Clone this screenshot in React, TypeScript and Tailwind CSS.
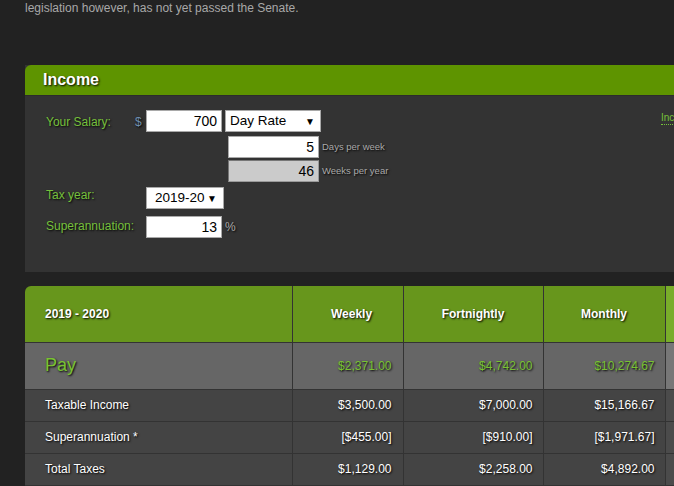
const shadow = "[text-shadow:1px_1px_2px_#000]";

const rows = [
  { label: "Taxable Income", values: ["$3,500.00", "$7,000.00", "$15,166.67", "$182,000.00"] },
  { label: "Superannuation *", values: ["[$455.00]", "[$910.00]", "[$1,971.67]", "[$23,660.00]"] },
  { label: "Total Taxes", values: ["$1,129.00", "$2,258.00", "$4,892.00", "$58,704.00"] },
];

function Field({ value, className = "", grey = false }: { value: string; className?: string; grey?: boolean }) {
  return (
    <div
      className={`h-[22px] border flex items-center justify-end pr-[4px] text-[14px] text-black ${
        grey ? "bg-[#cbcbcb] border-[#9a9a9a] border-t-[#777] border-l-[#777]" : "bg-white border-[#a9a9a9]"
      } ${className}`}
    >
      {value}
    </div>
  );
}

function Select({ value, className = "" }: { value: string; className?: string }) {
  return (
    <div
      className={`h-[22px] bg-white border border-[#a9a9a9] flex items-center justify-between pl-[4px] pr-[5px] text-[13.5px] text-black ${className}`}
    >
      <span>{value}</span>
      <span className="text-[10px]">▼</span>
    </div>
  );
}

export default function App() {
  return (
    <div className="w-[674px] h-[486px] overflow-hidden bg-[#222] font-['Liberation_Sans',Arial,sans-serif]">
      <div className="w-[790px] pl-[25px]">
        <p className="text-[12px] leading-[16px] text-[#a8a8a8]">
          legislation however, has not yet passed the Senate.
        </p>

        {/* Income panel */}
        <div className="mt-[49px] bg-[#333]">
          <div className={`h-[31px] bg-[#5e9400] rounded-tl-[6px] pl-[18px] flex items-center text-[16px] font-bold text-white border-b border-[#2c2c2c] ${shadow}`}>
            Income
          </div>
          <div className="relative h-[176px] pl-[21px] pt-[14px]">
            <a className="absolute left-[636px] top-[16px] text-[10px] text-[#77c23a] border-b border-dotted border-[#77c23a] leading-[12px]">
              Income tax rates
            </a>

            <div className="flex items-start">
              <span className={`w-[89px] pt-[3px] text-[12px] text-[#76c03c] ${shadow}`}>Your Salary:</span>
              <span className={`w-[11px] pt-[3px] text-[12px] text-[#6f8fb0] ${shadow}`}>$</span>
              <Field value="700" className="w-[76px]" />
              <Select value="Day Rate" className="ml-[3px] w-[96px]" />
            </div>
            <div className="flex items-center mt-[4px] ml-[182px]">
              <Field value="5" className="w-[91px]" />
              <span className={`ml-[3px] text-[9.5px] text-[#aaa] ${shadow}`}>Days per week</span>
            </div>
            <div className="flex items-center mt-[2px] ml-[182px]">
              <Field value="46" grey className="w-[91px]" />
              <span className={`ml-[3px] text-[9.5px] text-[#aaa] ${shadow}`}>Weeks per year</span>
            </div>

            <div className="flex items-start mt-[5px]">
              <span className={`w-[100px] -mt-[1px] text-[12px] text-[#76c03c] ${shadow}`}>Tax year:</span>
              <Select value="2019-20" className="w-[78px] pl-[8px] pr-[6px]" />
            </div>
            <div className="flex items-center mt-[7px]">
              <span className={`w-[100px] -mt-[2px] text-[12px] text-[#76c03c] ${shadow}`}>Superannuation:</span>
              <Field value="13" className="w-[76px]" />
              <span className={`ml-[3px] text-[12px] text-[#aaa] ${shadow}`}>%</span>
            </div>
          </div>
        </div>

        {/* Results table */}
        <div className="mt-[14px] rounded-tl-[6px] overflow-hidden">
          <table className="w-[764px] table-fixed border-collapse text-[12px]">
            <colgroup>
              <col className="w-[267px]" />
              <col className="w-[111px]" />
              <col className="w-[140px]" />
              <col className="w-[122px]" />
              <col className="w-[124px]" />
            </colgroup>
            <thead>
              <tr className={`h-[56px] font-bold text-white ${shadow}`}>
                <th className="bg-[#67961c] border border-[#333] border-l-0 border-t-0 text-left pl-[20px]">2019 - 2020</th>
                <th className="bg-[#67961c] border border-[#333] border-t-0 text-center pl-[8px]">Weekly</th>
                <th className="bg-[#67961c] border border-[#333] border-t-0 text-center">Fortnightly</th>
                <th className="bg-[#67961c] border border-[#333] border-t-0 text-center">Monthly</th>
                <th className="bg-[#79ad2a] border border-[#333] border-t-0 text-right pr-[10px]">Annually</th>
              </tr>
            </thead>
            <tbody>
              <tr className={`h-[47px] text-[#78c232] ${shadow}`}>
                <td className="bg-[#666] border border-[#333] border-l-0 pl-[20px] text-[18px]">Pay</td>
                <td className="bg-[#666] border border-[#333] text-right pr-[11px]">$2,371.00</td>
                <td className="bg-[#666] border border-[#333] text-right pr-[10px]">$4,742.00</td>
                <td className="bg-[#666] border border-[#333] text-right pr-[10px]">$10,274.67</td>
                <td className="bg-[#777] border border-[#333] text-right pr-[10px]">$123,292.00</td>
              </tr>
              {rows.map((r) => (
                <tr key={r.label} className={`h-[32px] text-white ${shadow}`}>
                  <td className="bg-[#444] border border-[#333] border-l-0 pl-[20px]">{r.label}</td>
                  <td className="bg-[#444] border border-[#333] text-right pr-[11px]">{r.values[0]}</td>
                  <td className="bg-[#444] border border-[#333] text-right pr-[10px]">{r.values[1]}</td>
                  <td className="bg-[#444] border border-[#333] text-right pr-[10px]">{r.values[2]}</td>
                  <td className="bg-[#4b4b4b] border border-[#333] text-right pr-[10px]">{r.values[3]}</td>
                </tr>
              ))}
            </tbody>
          </table>
        </div>
      </div>
    </div>
  );
}
